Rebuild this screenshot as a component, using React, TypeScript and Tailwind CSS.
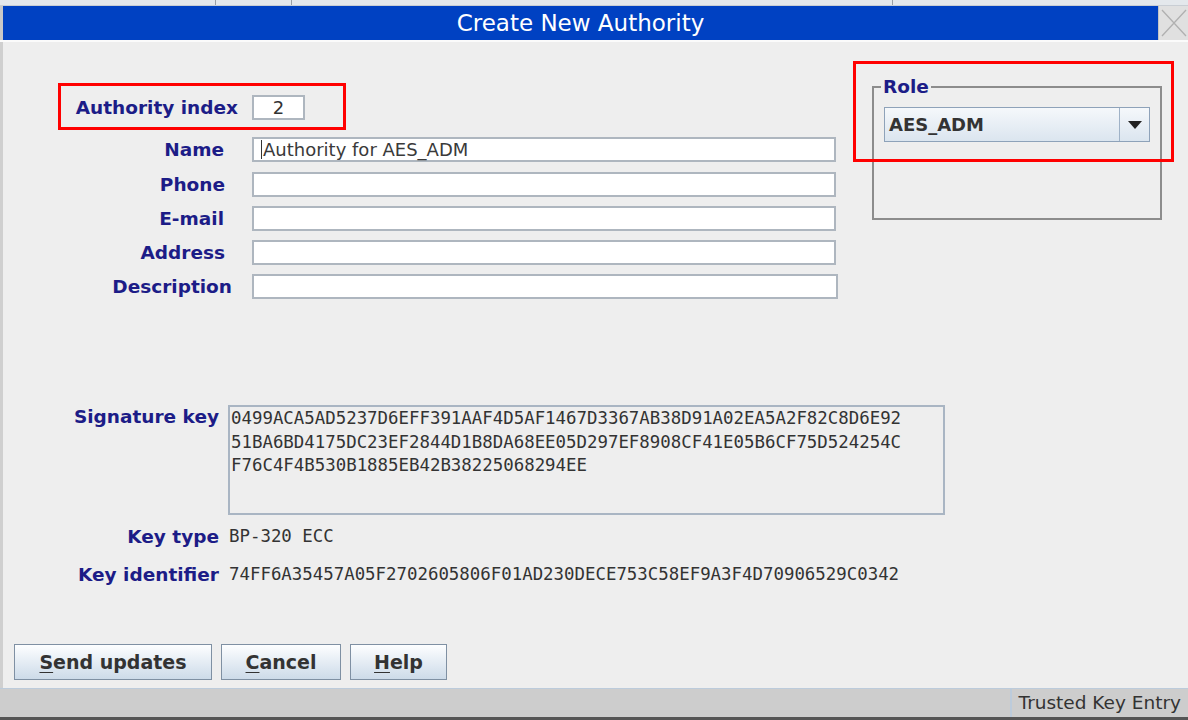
export default function App() {
  const label = "shrink-0 font-bold text-[18.5px] leading-[23px] text-[#1c1c87] whitespace-nowrap";
  const field = "shrink-0 h-[25px] bg-white border-2 border-[#aeb6bf]";
  const mono = "shrink-0 font-['DejaVu_Sans_Mono',monospace] text-[17.4px] leading-[23.5px] text-[#333333] whitespace-pre";
  const btn =
    "h-[36px] border border-[#7f90a3] bg-linear-to-b from-[#fdfeff] to-[#cddbe9] font-bold text-[19px] text-[#333333] flex items-center justify-center";
  return (
    <div className="w-[1188px] h-[720px] flex flex-col bg-[#eeeeee] overflow-hidden font-['DejaVu_Sans',sans-serif]">
      {/* top strip */}
      <div className="h-[6px] bg-[#e4e8ec] border-b border-[#c9ced4] flex">
        <div className="ml-[215px] w-[1px] h-full bg-[#9aa0a6]" />
        <div className="ml-[75px] w-[1px] h-full bg-[#9aa0a6]" />
        <div className="ml-[600px] w-[1px] h-full bg-[#9aa0a6]" />
      </div>
      {/* title bar */}
      <div className="h-[34px] flex">
        <div className="w-[3px] bg-[#c8c8c8]" />
        <div className="flex-1 bg-[#0041c2] flex items-center justify-center text-white text-[23px]">
          Create New Authority
        </div>
        <div className="w-[30px] bg-[#e0e0e0] border-l border-[#c4c4c4] flex items-center justify-center">
          <svg width="28" height="30" viewBox="0 0 28 30">
            <path d="M2 2 L26 28 M26 2 L2 28" stroke="#b0b0b0" strokeWidth="1.3" fill="none" />
          </svg>
        </div>
      </div>
      <div className="h-[2px] bg-[#fbfbfb]" />
      {/* body */}
      <div className="h-[646px] flex relative border-l-[3px] border-[#cfcfcf]">
        <div className="w-[869px] shrink-0 flex flex-col">
          {/* Authority index */}
          <div className="mt-[53px] flex items-center h-[25px]">
            <div className={`w-[235px] text-right ${label}`}>Authority index</div>
            <div className={`ml-[14px] w-[53px] ${field} flex items-center justify-center text-[18px] text-[#333333]`}>2</div>
          </div>
          {/* Name */}
          <div className="mt-[17px] flex items-center">
            <div className={`w-[249px] pr-[28px] text-right ${label}`}>Name</div>
            <div className={`w-[584px] ${field} flex items-center pl-[7px] text-[18px] text-[#3a3a3a]`}>
              <span className="w-[1px] h-[19px] bg-[#333333] mr-[1px]" />
              Authority for AES_ADM
            </div>
          </div>
          <div className="mt-[10px] flex items-center">
            <div className={`w-[249px] pr-[27px] text-right ${label}`}>Phone</div>
            <div className={`w-[584px] ${field}`} />
          </div>
          <div className="mt-[9px] flex items-center">
            <div className={`w-[249px] pr-[28px] text-right ${label}`}>E-mail</div>
            <div className={`w-[584px] ${field}`} />
          </div>
          <div className="mt-[9px] flex items-center">
            <div className={`w-[249px] pr-[27px] text-right ${label}`}>Address</div>
            <div className={`w-[584px] ${field}`} />
          </div>
          <div className="mt-[9px] flex items-center">
            <div className={`w-[249px] pr-[20px] text-right ${label}`}>Description</div>
            <div className={`w-[586px] ${field}`} />
          </div>
          {/* Signature key */}
          <div className="mt-[106px] flex items-start">
            <div className={`w-[216px] text-right ${label}`}>Signature key</div>
            <div className={`ml-[9px] w-[717px] h-[110px] border-2 border-[#a9b5c3] bg-[#eeeeee] pl-[1px] ${mono}`}>
              <div>0499ACA5AD5237D6EFF391AAF4D5AF1467D3367AB38D91A02EA5A2F82C8D6E92</div>
              <div>51BA6BD4175DC23EF2844D1B8DA68EE05D297EF8908CF41E05B6CF75D524254C</div>
              <div>F76C4F4B530B1885EB42B38225068294EE</div>
            </div>
          </div>
          <div className="mt-[10px] flex items-center">
            <div className={`w-[216px] text-right ${label}`}>Key type</div>
            <div className={`ml-[10px] ${mono}`}>BP-320 ECC</div>
          </div>
          <div className="mt-[14px] flex items-center">
            <div className={`w-[216px] text-right ${label}`}>Key identifier</div>
            <div className={`ml-[10px] ${mono}`}>74FF6A35457A05F2702605806F01AD230DECE753C58EF9A3F4D70906529C0342</div>
          </div>
          {/* buttons */}
          <div className="mt-[58px] ml-[11px] flex gap-[9px]">
            <div className={`w-[198px] ${btn}`}>
              <span className="underline underline-offset-[3px]">S</span>end updates
            </div>
            <div className={`w-[120px] ${btn}`}>
              <span className="underline underline-offset-[3px]">C</span>ancel
            </div>
            <div className={`w-[97px] ${btn}`}>
              <span className="underline underline-offset-[3px]">H</span>elp
            </div>
          </div>
        </div>
        {/* Role */}
        <div className="flex flex-col">
          <fieldset className="mt-[33px] w-[289px] h-[145px] border-2 border-[#8c8c8c] px-[10px]">
            <legend className={`ml-[-3px] px-[2px] ${label}`}>Role</legend>
            <div className="mt-[9px] h-[35px] w-[266px] flex border border-[#8ea2b9] bg-linear-to-b from-[#f5f8fb] to-[#dbe5ef]">
              <div className="flex-1 flex items-center pl-[4px] font-bold text-[18px] text-[#333333]">AES_ADM</div>
              <div className="w-[30px] border-l border-[#9fb2c7] flex items-center justify-center">
                <svg width="14" height="8" viewBox="0 0 14 8">
                  <path d="M0 0 L14 0 L7 8 Z" fill="#222222" />
                </svg>
              </div>
            </div>
          </fieldset>
        </div>
        {/* annotation boxes */}
        <div className="absolute left-[55px] top-[41px] w-[288px] h-[47px] border-[3px] border-[#ff0000]" />
        <div className="absolute left-[850px] top-[19px] w-[321px] h-[101px] border-[3px] border-[#ff0000]" />
      </div>
      {/* status bar */}
      <div className="h-[29px] bg-[#cdcdcd] border-t border-[#bccbdb] flex justify-end">
        <div className="border-l-2 border-[#bccbdb] pl-[7px] pr-[7px] flex items-center text-[18.5px] text-[#333333]">
          Trusted Key Entry
        </div>
      </div>
      <div className="h-[3px] bg-[#555555]" />
    </div>
  );
}
